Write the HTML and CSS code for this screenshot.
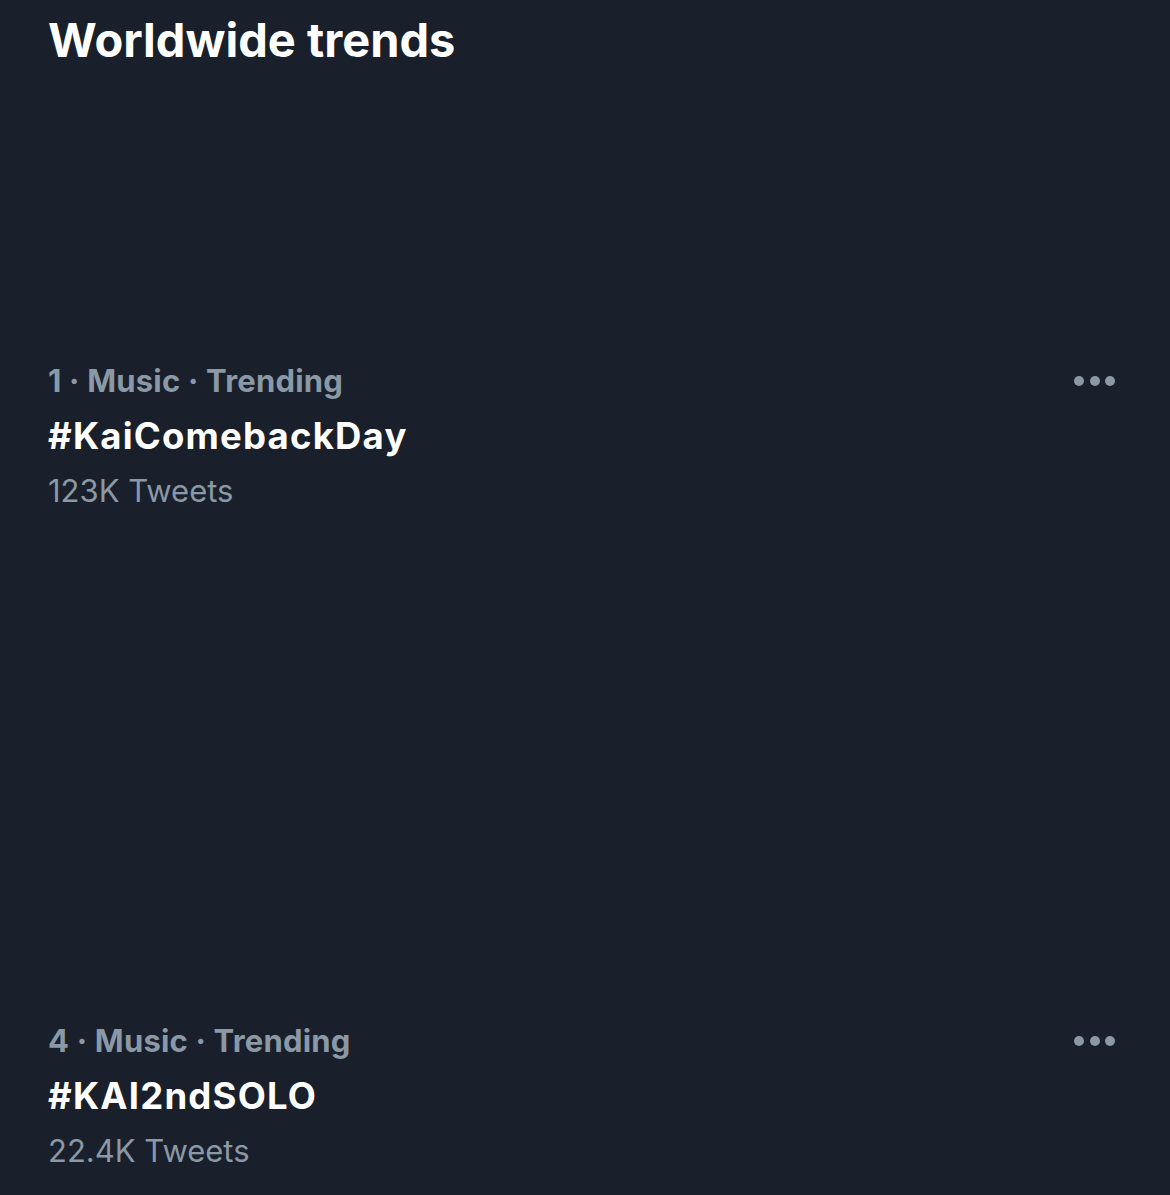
FILE: index.html
```html
<!DOCTYPE html>
<html>
<head>
    <title>Worldwide trends</title>
    <link rel="stylesheet" href="styles.css">
</head>
<body>
    <div class="container">
        <h2 class="heading">Worldwide trends</h2>

        <div class="trend trend-first">
            <div class="trend-text">
                <div class="meta">1 · Music · Trending</div>
                <div class="tag">#KaiComebackDay</div>
                <div class="count">123K Tweets</div>
            </div>
            <div class="more"><span></span><span></span><span></span></div>
        </div>

        <div class="trend trend-second">
            <div class="trend-text">
                <div class="meta">4 · Music · Trending</div>
                <div class="tag">#KAI2ndSOLO</div>
                <div class="count">22.4K Tweets</div>
            </div>
            <div class="more"><span></span><span></span><span></span></div>
        </div>
    </div>
</body>
</html>
```

FILE: styles.css
```css
html, body {
    height: 100%;
    margin: 0;
    padding: 0;
}

body {
    font-family: Inter, 'Liberation Sans', Arial, sans-serif;
    background: #19202b;
    color: #fff;
}

.container {
    padding: 13px 55px 0 48px;
}

.heading {
    margin: 0;
    font-size: 47px;
    line-height: 54px;
    font-weight: bold;
}

.trend {
    display: flex;
    justify-content: space-between;
    align-items: flex-start;
}

.trend-first {
    margin-top: 294px;
}

.trend-second {
    margin-top: 510px;
}

.meta {
    color: #8b98a5;
    font-size: 31px;
    font-weight: bold;
    line-height: 40px;
    letter-spacing: 0.2px;
}

.tag {
    margin: 13px 0;
    font-size: 36.5px;
    font-weight: bold;
    line-height: 44px;
    letter-spacing: 1.2px;
}

.count {
    color: #8b98a5;
    font-size: 31px;
    line-height: 40px;
}

.more {
    display: flex;
    gap: 5.5px;
    padding-top: 15px;
}

.more span {
    width: 10px;
    height: 10px;
    border-radius: 50%;
    background: #8b98a5;
}
```
